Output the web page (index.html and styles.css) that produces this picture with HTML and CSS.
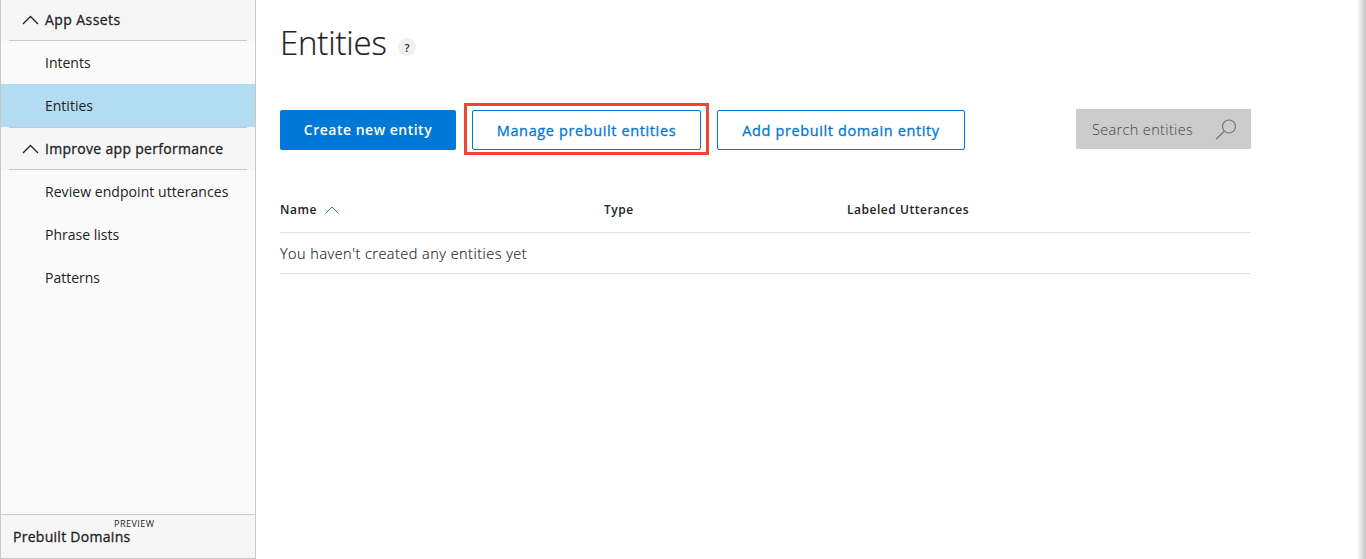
FILE: index.html
```html
<!DOCTYPE html>
<html lang="en">
<head>
<meta charset="utf-8">
<title>Entities</title>
<link rel="stylesheet" href="styles.css">
</head>
<body>
<div class="app">
  <nav class="sidebar">
    <div class="group group-first">
      <svg class="caret" width="17" height="10" viewBox="0 0 17 10"><path d="M1 9L8.5 1.5L16 9"/></svg>
      <span class="t-assets">App Assets</span>
    </div>
    <a class="item"><span>Intents</span></a>
    <a class="item active"><span>Entities</span></a>
    <div class="group group-second">
      <svg class="caret" width="17" height="10" viewBox="0 0 17 10"><path d="M1 9L8.5 1.5L16 9"/></svg>
      <span>Improve app performance</span>
    </div>
    <a class="item"><span class="t-review">Review endpoint utterances</span></a>
    <a class="item"><span>Phrase lists</span></a>
    <a class="item"><span>Patterns</span></a>
    <div class="domains"><span>Prebuilt Domains</span><span class="preview">PREVIEW</span></div>
  </nav>
  <main class="main">
    <header class="title"><h1>Entities</h1><span class="help">?</span></header>
    <div class="toolbar">
      <button class="btn primary"><span>Create new entity</span></button>
      <div class="highlight"><button class="btn outline manage"><span>Manage prebuilt entities</span></button></div>
      <button class="btn outline add"><span>Add prebuilt domain entity</span></button>
      <div class="search"><span>Search entities</span>
        <svg width="22" height="21" viewBox="0 0 22 21"><circle cx="14" cy="7.5" r="6.5"/><path d="M9.3 12.2L1 20.2"/></svg>
      </div>
    </div>
    <div class="table">
      <div class="row head">
        <div class="c1"><span>Name</span><svg width="14" height="8" viewBox="0 0 14 8"><path d="M.5 7.5L7 1L13.5 7.5"/></svg></div>
        <div class="c2"><span>Type</span></div>
        <div class="c3"><span>Labeled Utterances</span></div>
      </div>
      <div class="row empty"><span>You haven't created any entities yet</span></div>
    </div>
  </main>
  <div class="edge"></div>
</div>
</body>
</html>
```
FILE: styles.css
```css
* { box-sizing: border-box; }
body { margin: 0; background: #fff; color: #222; font: 14px/20px "Open Sans", "Noto Sans", sans-serif; }
.app { display: flex; width: 1366px; height: 559px; overflow: hidden; }
span, h1 { white-space: nowrap; }
.sidebar { width: 256px; display: flex; flex-direction: column; background: #fafafa; border: 1px solid #c8c8c8; border-top: 0; flex: none; }
.group { display: flex; align-items: center; gap: 6px; padding-left: 21px; background: #f6f6f6; letter-spacing: .3px; -webkit-text-stroke: .3px #222; position: relative; }
.group::after { content: ""; position: absolute; left: 8px; right: 8px; bottom: 0; height: 1px; background: #c8c8c8; }
.group-first { height: 41px; padding-bottom: 2px; }
.group-second { height: 43px; }
.group-second::before { content: ""; position: absolute; left: 8px; right: 8px; top: 0; height: 1px; background: #c8c8c8; }
.t-assets { letter-spacing: .42px; }
.caret path { fill: none; stroke: #222; stroke-width: 1.3; }
.item { height: 43px; padding: 0 0 0 44px; display: flex; align-items: center; }
.t-review { letter-spacing: .06px; }
.active { background: #b3dbf2; }
.domains { margin-top: auto; height: 44px; border-top: 1px solid #c8c8c8; background: #f6f6f6; padding: 12px 0 0 12px; display: flex; letter-spacing: .28px; -webkit-text-stroke: .3px #222; position: relative; }
.preview { position: absolute; left: 113px; top: 3px; font-size: 9px; line-height: 12px; letter-spacing: .5px; -webkit-text-stroke: 0; }
.main { width: 971px; margin-left: 24px; flex: none; }
.title { height: 110px; display: flex; }
h1 { margin: 20px 0 0; width: 118px; font-size: 33px; line-height: 46px; font-weight: 300; letter-spacing: -.2px; -webkit-text-stroke: .2px #222; }
.help { width: 18px; height: 18px; margin-top: 38px; border-radius: 50%; background: #f0f0f0; text-align: center; font-size: 11px; line-height: 19px; font-weight: 600; }
.toolbar { display: flex; height: 40px; }
.btn { height: 40px; padding: 0; border-radius: 2px; font: 600 14px/20px "Open Sans", "Noto Sans", sans-serif; flex: none; letter-spacing: .5px; }
.primary { width: 176px; background: #0078d7; border: 0; color: #fff; }
.outline { background: #fff; border: 1px solid #0078d7; color: #0078d7; font-size: 14.5px; font-weight: 400; letter-spacing: .62px; -webkit-text-stroke: .3px #0078d7; padding-top: 2px; }
.highlight { width: 245px; height: 52px; margin: -7px 8px 0; border: 3px solid #ee4536; padding: 4px 5px 0; flex: none; }
.manage { width: 229px; }
.add { width: 248px; }
.search { width: 175px; height: 40px; margin: -1px 0 0 auto; padding: 0 14px 0 16px; background: #ccc; color: #444; font-size: 14.5px; font-weight: 300; letter-spacing: .35px; display: flex; align-items: center; justify-content: space-between; }
.search span { padding-top: 1px; }
.search svg { fill: none; stroke: #777; stroke-width: 1.2; }
.table { margin-top: 37px; }
.row { display: flex; align-items: center; border-bottom: 1px solid #e1e1e1; }
.head { height: 46px; font-size: 12px; font-weight: 600; letter-spacing: .53px; }
.c1 { width: 324px; display: flex; align-items: center; gap: 8px; }
.c1 svg { fill: none; stroke: #2c7cb0; stroke-width: 1; }
.c2 { width: 243px; }
.empty { height: 41px; padding-top: 1px; font-size: 14.5px; font-weight: 300; letter-spacing: .47px; -webkit-text-stroke: .15px #222; }
.edge { width: 9px; margin-left: auto; background: linear-gradient(90deg, #fff, #c4c4c4); }
```
